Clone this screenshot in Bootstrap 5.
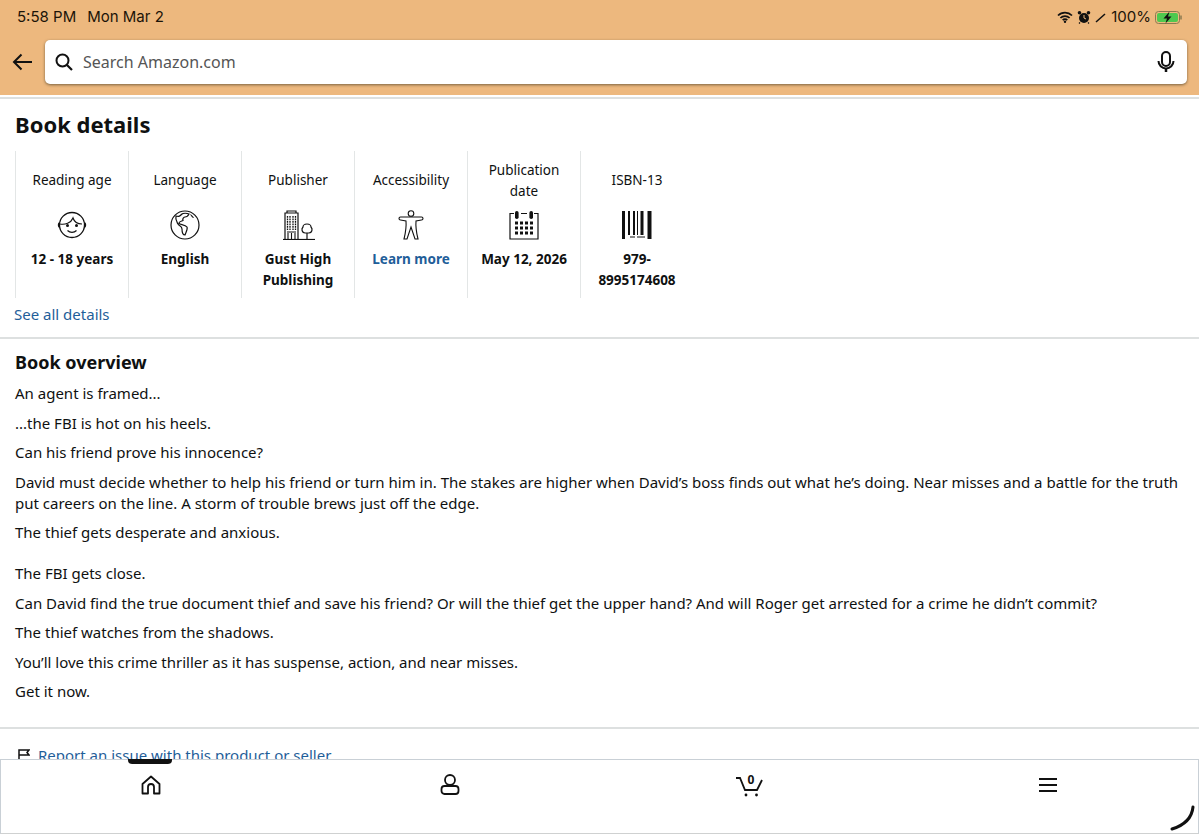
<!DOCTYPE html>
<html lang="en">
<head>
  <meta charset="UTF-8" />
  <title>Book details</title>
  <link href="https://cdn.jsdelivr.net/npm/bootstrap@5.3.0/dist/css/bootstrap.min.css" rel="stylesheet" />
  <style>
    html, body { height: 834px; overflow: hidden; }
    body { font-family: "Noto Sans", "Liberation Sans", sans-serif; color: #0f1111; background: #fff; }
    .screen { height: 834px; }
    .top-area { height: 95px; background: #edb87e; flex: none; }
    .status-row { height: 34px; padding: 7px 15px 0 17px; font-family: Inter, "Liberation Sans", sans-serif; font-size: 15px; line-height: 20px; color: #1c1408; }
    .status-time { margin-right: 11px; }
    .batt-text { font-size: 15px; margin: 0 4px 0 5px; }
    .search-row { padding: 6px 12px 0 12px; }
    .back-btn { width: 33px; flex: none; }
    .search-box { height: 44px; background: #fff; border-radius: 5px; box-shadow: 0 1px 3px rgba(60,50,30,.65); padding: 0 12px 0 10px; }
    .search-text { margin-left: 10px; font-size: 16px; color: #555; }
    .page-main { min-height: 0; overflow: hidden; padding-top: 2px; }
    .rule-top { border-top: 2px solid #dde0e0; }
    .book-title { font-size: 22px; font-weight: 700; line-height: 28px; margin: 11px 0 13px 15px; }
    .attr-strip { padding-left: 15px; }
    .attr-cell { width: 113px; height: 147px; border-left: 1px solid #e3e6e6; padding: 0 8px; text-align: center; font-size: 13.5px; line-height: 20.5px; }
    .attr-label { height: 59px; }
    .attr-icon { height: 32px; margin-bottom: 7px; }
    .attr-value { font-weight: 700; font-size: 13.5px; }
    .amz-link { color: #1f5e99; text-decoration: none; }
    .all-details { display: block; margin: 6px 0 12px 14px; font-size: 15px; line-height: 21px; }
    .rule-mid { border-top: 2px solid #dde0e0; }
    .overview-title { font-size: 18px; font-weight: 700; line-height: 24px; margin: 11px 0 9px 15px; }
    .overview-text { padding: 0 15px; font-size: 15px; line-height: 21px; }
    .overview-text p { margin: 0 0 8.5px; }
    .overview-text .gap-after { margin-bottom: 20px; }
    .rule-low { border-top: 2px solid #dde0e0; margin-top: 25px; }
    .report-row { padding: 16px 0 0 18px; font-size: 15px; line-height: 21px; white-space: nowrap; }
    .bottom-bar { height: 75px; flex: none; border: 1px solid #c9d0d6; border-bottom-color: #cfd1d1; background: #fff; }
    .bar-slot { width: 25%; padding-top: 11px; text-align: center; }
    .home-mark { position: absolute; left: 128px; top: 759px; width: 44px; height: 5px; background: #111; border-radius: 0 0 4px 4px; }
    .spin-mark { position: absolute; left: 1168px; top: 804px; }
  </style>
</head>
<body>
  <div class="screen d-flex flex-column">
    <div class="top-area">
      <div class="status-row d-flex align-items-start">
        <span class="status-time">5:58 PM</span>
        <span>Mon Mar 2</span>
        <span class="d-flex align-items-center ms-auto">
          <svg width="16" height="12" viewBox="0 0 16 12" class="me-1"><path d="M1 4.5a10 10 0 0 1 14 0M3.4 7a6.5 6.5 0 0 1 9.2 0M5.7 9.2a3.2 3.2 0 0 1 4.6 0" fill="none" stroke="#111" stroke-width="1.7"/><circle cx="8" cy="10.7" r="1.2" fill="#111"/></svg>
          <svg width="14" height="14" viewBox="0 0 14 14" class="me-1"><circle cx="7" cy="8" r="5" fill="#111"/><circle cx="2.5" cy="2.8" r="1.8" fill="#111"/><circle cx="11.5" cy="2.8" r="1.8" fill="#111"/><path d="M7 5v3l2 1" stroke="#edb87e" fill="none"/><path d="M3 12.5l-1 1M11 12.5l1 1" stroke="#111" stroke-width="1.2"/></svg>
          <svg width="11" height="11" viewBox="0 0 11 11"><path d="M1 10 10 2" stroke="#111" stroke-width="1.5"/></svg>
          <span class="batt-text">100%</span>
          <svg width="29" height="13" viewBox="0 0 29 13"><rect x=".5" y=".5" width="24" height="12" rx="3" fill="none" stroke="#8a7a50"/><rect x="2" y="2" width="21" height="9" rx="2" fill="#4fc94f"/><path d="M26 4.5v4" stroke="#8a7a50" stroke-width="1.5"/><path d="M14.5 .5 8.5 7.5h3.5l-1.5 5 6-7h-3.5z" fill="#111"/></svg>
        </span>
      </div>
      <div class="search-row d-flex align-items-center">
        <div class="back-btn">
          <svg width="21" height="18" viewBox="0 0 21 18" class="d-block"><path d="M20 9H2M9.5 1.5 2 9l7.5 7.5" fill="none" stroke="#111" stroke-width="2"/></svg>
        </div>
        <div class="search-box flex-grow-1 d-flex align-items-center">
          <svg width="18" height="18" viewBox="0 0 18 18"><circle cx="7.5" cy="7.5" r="6" fill="none" stroke="#111" stroke-width="2"/><path d="M12 12l5 5" stroke="#111" stroke-width="2.2"/></svg>
          <span class="search-text">Search Amazon.com</span>
          <svg width="18" height="22" viewBox="0 0 18 22" class="ms-auto"><rect x="5" y="1" width="8" height="14" rx="4" fill="none" stroke="#111" stroke-width="2"/><path d="M1.5 10a7.5 7.5 0 0 0 15 0" fill="none" stroke="#111" stroke-width="2"/><path d="M9 17.5V21" stroke="#111" stroke-width="2.5"/></svg>
        </div>
      </div>
    </div>

    <div class="page-main flex-grow-1">
      <div class="rule-top"></div>
      <h1 class="book-title">Book details</h1>
      <div class="attr-strip d-flex">
        <div class="attr-cell">
          <div class="attr-label d-flex align-items-center justify-content-center">Reading age</div>
          <div class="attr-icon">
            <svg width="30" height="30" viewBox="0 0 30 30"><circle cx="15" cy="15" r="12.5" fill="none" stroke="#111" stroke-width="1.3"/><path d="M3 14c5 1 11-1 13-6 1 3 4 6 9 6" fill="none" stroke="#111" stroke-width="1.2"/><circle cx="10.5" cy="15.5" r="1.5" fill="#111"/><circle cx="19.5" cy="15.5" r="1.5" fill="#111"/><path d="M10.5 20.5c2.5 2.5 6.500 2.500 9 0" fill="none" stroke="#111" stroke-width="1.2"/><path d="M2.500 12.500c-1.500 1-1.500 4 0 5M27.500 12.500c1.500 1 1.500 4 0 5" fill="none" stroke="#111" stroke-width="1.2"/></svg>
          </div>
          <div class="attr-value">12 - 18 years</div>
        </div>
        <div class="attr-cell">
          <div class="attr-label d-flex align-items-center justify-content-center">Language</div>
          <div class="attr-icon">
            <svg width="30" height="30" viewBox="0 0 30 30"><circle cx="15" cy="15" r="14" fill="none" stroke="#111" stroke-width="1.2"/><path d="M6 6c3 1 4 0 6-2 1-1 5-1 7 0-1 2-3 3-4 3s-3 2-2 3-4 1-4 3 6 1 8 4c1 2-1 5-2 8-2 0-3-3-3-6s-3-3-4-5-3-4-2-8z" fill="none" stroke="#111" stroke-width="1.2"/><path d="M20 4c2 1 3 2 4 4-2 0-3-2-4-4z" fill="#111"/></svg>
          </div>
          <div class="attr-value">English</div>
        </div>
        <div class="attr-cell">
          <div class="attr-label d-flex align-items-center justify-content-center">Publisher</div>
          <div class="attr-icon">
            <svg width="33" height="30" viewBox="0 0 33 30"><path d="M1 29.500h32" stroke="#111" stroke-width="1.200"/><path d="M3 29.500V3h13v26.500M5 3V1h9v2" fill="none" stroke="#111" stroke-width="1.200"/><path d="M5.500 6v14M8 6v14M11 6v14M13.500 6v14" stroke="#111" stroke-width="1.300" stroke-dasharray="1.800 .7"/><path d="M5 22h9M6 29v-6M9.500 29v-6M13 29v-6" fill="none" stroke="#111" stroke-width="1.100"/><path d="M25 29v-6" stroke="#111" stroke-width="1.200"/><path d="M25 14c-3 0-4 2-4 3-2 2-1 6 2 6h4c3 0 4-4 2-6 0-1-1-3-4-3z" fill="none" stroke="#111" stroke-width="1.200"/></svg>
          </div>
          <div class="attr-value">Gust High Publishing</div>
        </div>
        <div class="attr-cell">
          <div class="attr-label d-flex align-items-center justify-content-center">Accessibility</div>
          <div class="attr-icon">
            <svg width="26" height="30" viewBox="0 0 26 30"><circle cx="13" cy="3.500" r="2.800" fill="none" stroke="#111" stroke-width="1.100"/><path d="M1 8.500c0-1 .5-1.500 1.500-1.500h21c1 0 1.500.5 1.500 1.500s-.5 1.500-1.500 1.500L18 11c-.5 6 .5 12 2 18h-3l-4-12-4 12H6c1.500-6 2.500-12 2-18l-5.500-1C1.500 10 1 9.500 1 8.500z" fill="none" stroke="#111" stroke-width="1.100"/></svg>
          </div>
          <div class="attr-value"><a href="#" class="amz-link">Learn more</a></div>
        </div>
        <div class="attr-cell">
          <div class="attr-label d-flex align-items-center justify-content-center">Publication date</div>
          <div class="attr-icon">
            <svg width="30" height="30" viewBox="0 0 30 30"><path d="M5 3.500H1v25.500h28V3.500h-4M12 3.500h6" fill="none" stroke="#111" stroke-width="1.200"/><rect x="6" y="1" width="3.600" height="8" rx="1.800" fill="#111"/><rect x="20.400" y="1" width="3.600" height="8" rx="1.800" fill="#111"/><path d="M6 13h18M6 18h18M6 23h18" stroke="#111" stroke-width="3" stroke-dasharray="3 2"/></svg>
          </div>
          <div class="attr-value">May 12, 2026</div>
        </div>
        <div class="attr-cell">
          <div class="attr-label d-flex align-items-center justify-content-center">ISBN-13</div>
          <div class="attr-icon">
            <svg width="30" height="30" viewBox="0 0 30 30"><path d="M1.500 1v28" stroke="#111" stroke-width="3"/><path d="M7 1v24M12 1v24" stroke="#111" stroke-width="2"/><path d="M15.500 1v24" stroke="#111" stroke-width="1"/><path d="M20 1v24" stroke="#111" stroke-width="3"/><path d="M27.500 1v28" stroke="#111" stroke-width="4"/><path d="M8 27h5M15 27h8" stroke="#111" stroke-width="1"/></svg>
          </div>
          <div class="attr-value">979-8995174608</div>
        </div>
      </div>
      <a href="#" class="amz-link all-details">See all details</a>
      <div class="rule-mid"></div>
      <h2 class="overview-title">Book overview</h2>
      <div class="overview-text">
        <p>An agent is framed...</p>
        <p>...the FBI is hot on his heels.</p>
        <p>Can his friend prove his innocence?</p>
        <p>David must decide whether to help his friend or turn him in. The stakes are higher when David’s boss finds out what he’s doing. Near misses and a battle for the truth put careers on the line. A storm of trouble brews just off the edge.</p>
        <p class="gap-after">The thief gets desperate and anxious.</p>
        <p>The FBI gets close.</p>
        <p>Can David find the true document thief and save his friend? Or will the thief get the upper hand? And will Roger get arrested for a crime he didn’t commit?</p>
        <p>The thief watches from the shadows.</p>
        <p>You’ll love this crime thriller as it has suspense, action, and near misses.</p>
        <p>Get it now.</p>
      </div>
      <div class="rule-low"></div>
      <div class="report-row d-flex align-items-start">
        <svg width="12" height="13" viewBox="0 0 12 13" class="me-2 mt-1"><path d="M1 13V1h10L9 3.500l2 2.500H1" fill="none" stroke="#111" stroke-width="1.500"/></svg>
        <a href="#" class="amz-link">Report an issue with this product or seller</a>
      </div>
    </div>

    <nav class="bottom-bar d-flex">
      <div class="bar-slot">
        <svg width="20" height="20" viewBox="0 0 20 20"><path d="M1.500 9 10 1.500 18.500 9v9.500h-5.500V12a2.500 2.500 0 0 0-6 0v6.500H1.500z" fill="none" stroke="#111" stroke-width="1.800" stroke-linejoin="round"/></svg>
      </div>
      <div class="bar-slot">
        <svg width="20" height="21" viewBox="0 0 20 21"><circle cx="10" cy="6" r="5" fill="none" stroke="#111" stroke-width="1.800"/><rect x="1.500" y="12" width="17" height="8" rx="3" fill="none" stroke="#111" stroke-width="1.800"/></svg>
      </div>
      <div class="bar-slot">
        <svg width="29" height="24" viewBox="0 0 29 24"><path d="M1 5h4l5 12h12l5-10" fill="none" stroke="#111" stroke-width="1.800"/><circle cx="11" cy="22" r="1.400" fill="#111"/><circle cx="21.500" cy="22" r="1.400" fill="#111"/><text x="16" y="11" text-anchor="middle" font-size="12" font-weight="700" font-family="Noto Sans, sans-serif" fill="#111">0</text></svg>
      </div>
      <div class="bar-slot">
        <svg width="20" height="16" viewBox="0 0 20 16"><path d="M1 2h18M1 8h18M1 14h18" stroke="#111" stroke-width="1.800"/></svg>
      </div>
    </nav>
  </div>
  <div class="home-mark"></div>
  <svg class="spin-mark" width="28" height="28" viewBox="0 0 28 28"><path d="M25 3c-1 10-8 18-21 22" fill="none" stroke="#111" stroke-width="3" stroke-linecap="round"/></svg>
  <script src="https://cdn.jsdelivr.net/npm/bootstrap@5.3.0/dist/js/bootstrap.bundle.min.js"></script>
</body>
</html>
